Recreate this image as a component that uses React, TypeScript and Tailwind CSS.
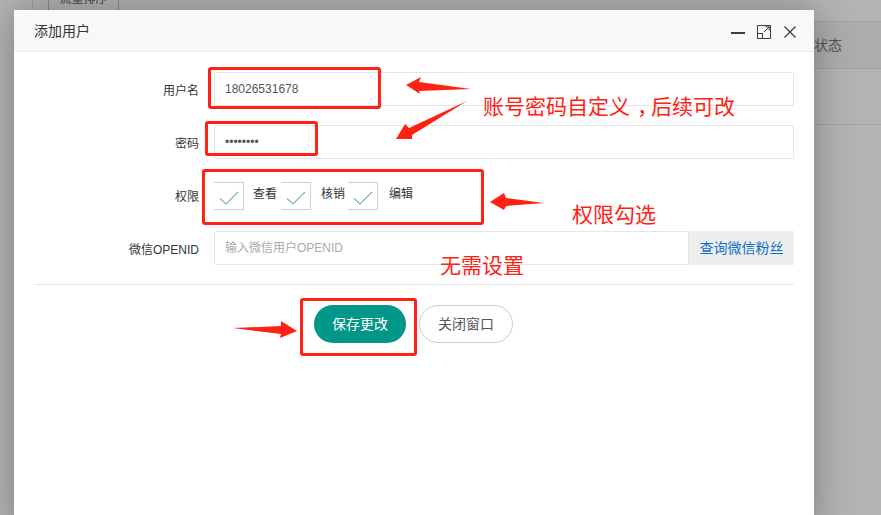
const redBoxes = [
  'left-[208px] top-[67px] w-[173px] h-[42px]',
  'left-[205px] top-[121px] w-[113px] h-[35px]',
  'left-[202px] top-[169px] w-[282px] h-[56px]',
  'left-[300px] top-[298px] w-[117px] h-[58px]',
];

const perms = [
  { name: '查看', gap: 'ml-[9px]' },
  { name: '核销', gap: 'ml-[10px]' },
  { name: '编辑', gap: 'ml-[11px]' },
];

function Arrows() {
  return (
    <svg className="absolute left-0 top-0 pointer-events-none" width="881" height="515" fill="#ff2114">
      <polygon points="406,85 421,77 419,82 471,89 419,91 420,94" />
      <polygon points="396,139 405,124 409,128 467,101 412,135 412,139" />
      <polygon points="490,202 504,193 506,198 544,203 506,206 504,210" />
      <polygon points="297,331 281,321 281,326 233,328 281,334 280,338" />
    </svg>
  );
}

function Check() {
  return (
    <svg width="20" height="14" viewBox="0 0 20 14" fill="none" stroke="#7dbb94" strokeWidth="1.2">
      <path d="M1 7.5 L7 13 L19 1" />
    </svg>
  );
}

export default function App() {
  return (
    <div className="relative w-[881px] h-[515px] overflow-hidden bg-[#b3b3b3] font-['Liberation_Sans','Noto_Sans_CJK_SC',sans-serif]">
      {/* page behind the dialog */}
      <div className="h-[22px] border-b border-[#a0a0a0] ml-[32px] border-l flex items-start pl-[15px]">
        <div className="w-[71px] h-[21px] border-x border-[#8a8a8a] overflow-hidden text-[12px] leading-[4px] text-[#444] text-center">
          <span className="inline-block -translate-y-[3px]">流量排序</span>
        </div>
      </div>
      <div className="h-[47px] bg-[#acacac] border-b border-[#a0a0a0] ml-[14px] flex items-center justify-end pr-[39px] text-[14px] text-[#555]">状态</div>
      <div className="h-[56px] border-b border-[#a0a0a0] ml-[14px]"></div>

      {/* dialog */}
      <div className="absolute left-[14px] top-[10px] w-[800px] h-[520px] bg-white rounded-t-[2px] shadow-[0_0_36px_rgba(0,0,0,0.3)]">
        <div className="h-[42px] bg-[#f8f8f8] border-b border-[#eeeeee] pl-[20px] pr-[18px] flex items-center justify-between">
          <span className="text-[14px] text-[#333333] pt-[2px]">添加用户</span>
          <div className="flex items-center gap-[13px] pt-[2px] text-[#3d3d46]">
            <svg className="-mr-[1px]" width="14" height="14" viewBox="0 0 14 14" fill="none" stroke="currentColor" strokeWidth="2">
              <path d="M0 8 H14" />
            </svg>
            <svg width="14" height="14" viewBox="0 0 14 14" fill="none" stroke="currentColor" strokeWidth="1">
              <path d="M3.5 .5 H13.5 V13.5 H5.5 M.5 8.5 V.5 H3.5" />
              <rect x=".5" y="8.5" width="5" height="5" />
              <path d="M7 7 L12 2 M8.5 1.8 H12.2 V5.5" />
            </svg>
            <svg width="12" height="12" viewBox="0 0 12 12" fill="none" stroke="currentColor" strokeWidth="1.3">
              <path d="M.5 .5 L11.5 11.5 M11.5 .5 L.5 11.5" />
            </svg>
          </div>
        </div>

        <div className="px-[20px] pt-[20px] text-[12px] text-[#555555]">
          <div className="flex items-center gap-[15px] h-[34px] mb-[19px]">
            <label className="w-[165px] text-right text-[#333] pt-[4px]">用户名</label>
            <input readOnly value="18026531678" className="flex-1 h-[34px] border border-[#e6e6e6] rounded-[2px] px-[10px] text-[12px] text-[#555] outline-none" />
          </div>
          <div className="flex items-center gap-[15px] h-[34px] mb-[23px]">
            <label className="w-[165px] text-right text-[#333] pt-[4px]">密码</label>
            <input readOnly type="password" value="12345678" className="flex-1 h-[34px] border border-[#e6e6e6] rounded-[2px] px-[10px] text-[12px] text-[#555] outline-none" />
          </div>
          <div className="flex items-center gap-[15px] h-[28px] mb-[21px]">
            <label className="w-[165px] text-right text-[#333] pt-[1px]">权限</label>
            <div className="flex items-center">
              {perms.map((p) => (
                <div key={p.name} className="flex items-start w-[67px]">
                  <div className="w-[30px] h-[28px] border-y border-r border-[#d2d2d2] flex items-center justify-center pt-[3px] shrink-0">
                    <Check />
                  </div>
                  <span className={`${p.gap} text-[#333] leading-[24px]`}>{p.name}</span>
                </div>
              ))}
            </div>
          </div>
          <div className="flex items-center gap-[15px] h-[34px]">
            <label className="w-[165px] text-right text-[#333] pt-[4px]">微信OPENID</label>
            <div className="flex flex-1 h-[34px]">
              <input readOnly placeholder="输入微信用户OPENID" className="flex-1 min-w-0 border border-[#e6e6e6] rounded-l-[2px] px-[10px] text-[12px] outline-none placeholder:text-[#aaaaaa]" />
              <div className="w-[105px] bg-[#eeeeee] flex items-center justify-center text-[#0e6fc9] text-[14px] pt-[1px]">查询微信粉丝</div>
            </div>
          </div>
          <div className="mt-[19px] border-t border-[#e6e6e6] pt-[20px] pr-[1px] flex justify-center gap-[13px]">
            <button className="w-[92px] h-[38px] rounded-full bg-[#009688] text-white text-[14px]">保存更改</button>
            <button className="w-[94px] h-[38px] rounded-full border border-[#cccccc] bg-white text-[#555] text-[14px]">关闭窗口</button>
          </div>
        </div>
      </div>

      {/* red annotations drawn over the screenshot */}
      {redBoxes.map((c) => (
        <div key={c} className={`absolute ${c} border-[3px] border-[#ff2114] rounded-[3px]`}></div>
      ))}
      <Arrows />
      <div className="absolute left-[483px] top-[94px] text-[21px] leading-[26px] text-[#ff2114] whitespace-nowrap">
        账号密码自定义<span className="inline-block w-[21px] pl-[7px] [font-feature-settings:'halt']">，</span>后续可改
      </div>
      <div className="absolute left-[572px] top-[202px] text-[21px] leading-[26px] text-[#ff2114] whitespace-nowrap">权限勾选</div>
      <div className="absolute left-[440px] top-[253px] text-[21px] leading-[26px] text-[#ff2114] whitespace-nowrap">无需设置</div>
    </div>
  );
}
